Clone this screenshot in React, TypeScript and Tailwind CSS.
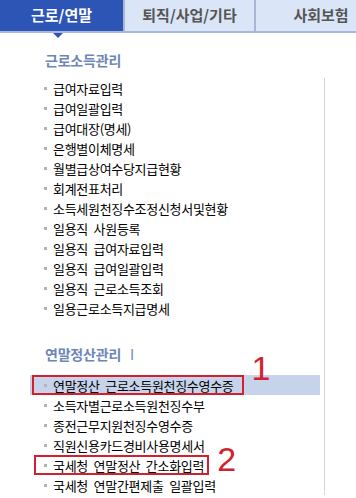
import React from 'react'

const font = { fontFamily: '"Noto Sans CJK KR", "Noto Sans", sans-serif' }
const markFont = { fontFamily: '"Liberation Sans", Arial, sans-serif' }

const incomeItems = [
  '급여자료입력',
  '급여일괄입력',
  '급여대장(명세)',
  '은행별이체명세',
  '월별급상여수당지급현황',
  '회계전표처리',
  '소득세원천징수조정신청서및현황',
  '일용직 사원등록',
  '일용직 급여자료입력',
  '일용직 급여일괄입력',
  '일용직 근로소득조회',
  '일용근로소득지급명세',
]

const yearEndItems = [
  { label: '연말정산 근로소득원천징수영수증', mark: '1' },
  { label: '소득자별근로소득원천징수부' },
  { label: '종전근무지원천징수영수증' },
  { label: '직원신용카드경비사용명세서' },
  { label: '국세청 연말정산 간소화입력', mark: '2' },
  { label: '국세청 연말간편제출 일괄입력' },
]

type ItemProps = { label: string; active?: boolean; mark?: string }

function Item({ label, active, mark }: ItemProps) {
  return (
    <li className={`flex h-5 items-center ${active ? 'bg-[#c6d3ea]' : ''}`}>
      <div
        className={`flex h-5 items-center ${
          mark === '1'
            ? 'ml-[2px] border-2 border-[#d4202c] pl-[10px] pr-[8px]'
            : mark === '2'
              ? 'ml-[4px] border-2 border-[#d4202c] pl-[8px] pr-[3px]'
              : 'pl-[14px]'
        }`}
      >
        <span className="mr-[6px] h-[3px] w-[3px] shrink-0 bg-[#b4b4b4]" />
        <span className="whitespace-nowrap text-[13px] leading-none tracking-[-0.3px] text-black [word-spacing:3px]">
          {label}
        </span>
      </div>
      {mark === '1' ? (
        <span className="relative -top-[17px] ml-[8px] text-[34px] font-light leading-none text-[#d4202c]" style={markFont}>
          1
        </span>
      ) : null}
      {mark === '2' ? (
        <span className="relative -top-[6px] ml-[8px] text-[34px] font-light leading-none text-[#d4202c]" style={markFont}>
          2
        </span>
      ) : null}
    </li>
  )
}

function SectionTitle({ children }: { children: React.ReactNode }) {
  return (
    <h2 className="flex h-5 items-center pl-[15px] text-[14px] font-bold tracking-[-0.2px] text-[#6d86b7]">
      {children}
    </h2>
  )
}

export default function App() {
  return (
    <div className="h-[498px] w-[356px] overflow-hidden bg-white" style={font}>
      <div className="flex h-[33px] border-b-2 border-[#a7b8d8]">
        <div className="relative flex w-[123px] shrink-0 items-center justify-center bg-[#2d55b6] text-[15px] font-bold text-white">
          근로/연말
          <span className="absolute -bottom-[7px] left-[53px] h-0 w-0 border-x-[5px] border-t-[5px] border-x-transparent border-t-[#2d55b6]" />
        </div>
        <div className="flex w-[133px] shrink-0 items-center justify-center border-x-2 border-[#a9b7d2] bg-[#dbe5f8] text-[15px] font-bold text-[#555]">
          퇴직/사업/기타
        </div>
        <div className="flex w-[130px] shrink-0 items-center justify-center bg-[#dbe5f8] text-[15px] font-bold text-[#555]">
          사회보험
        </div>
      </div>

      <div className="pl-[30px] pt-[17px]">
        <SectionTitle>근로소득관리</SectionTitle>
        <div className="mt-[8px] w-[295px] border-r border-[#d6d6d6] pr-[4px]">
          <ul>
            {incomeItems.map((label) => (
              <Item key={label} label={label} />
            ))}
          </ul>

          <div className="mt-[26px]">
            <SectionTitle>
              연말정산관리
              <span className="ml-[9px] font-normal">I</span>
            </SectionTitle>
          </div>
          <ul className="mt-[11px]">
            {yearEndItems.map((item, i) => (
              <Item key={item.label} label={item.label} mark={item.mark} active={i === 0} />
            ))}
          </ul>
        </div>
      </div>
    </div>
  )
}
